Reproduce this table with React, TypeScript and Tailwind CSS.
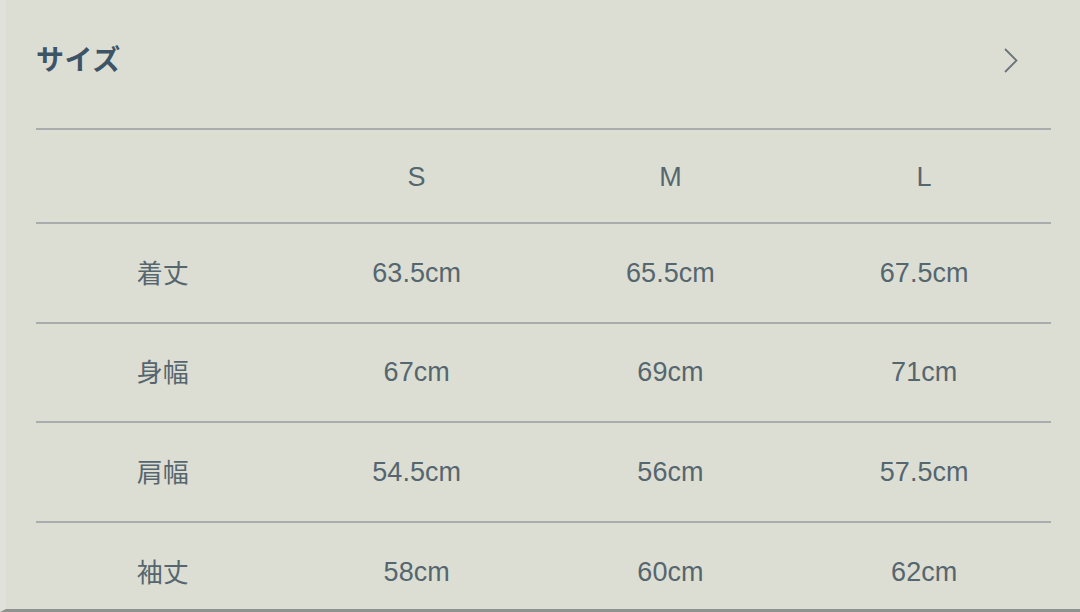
const sizes = ["S", "M", "L"];

const rows = [
  { label: "着丈", values: ["63.5cm", "65.5cm", "67.5cm"] },
  { label: "身幅", values: ["67cm", "69cm", "71cm"] },
  { label: "肩幅", values: ["54.5cm", "56cm", "57.5cm"] },
  { label: "袖丈", values: ["58cm", "60cm", "62cm"] },
];

export default function App() {
  return (
    <div
      className="w-[1080px] h-[612px] overflow-hidden bg-[#dcded4] border-l-[6px] border-l-[#e0e1da] border-b-[3px] border-b-[#8e9290] text-[#56666f]"
      style={{ fontFamily: '"Liberation Sans", "Noto Sans CJK JP", sans-serif' }}
    >
      <div className="pl-[30px] pr-[29px]">
        {/* Header */}
        <div className="h-[128px] flex items-start justify-between pt-[42px]">
          <h1
            className="text-[28px] leading-[32px] font-bold text-[#3d5466] tracking-[0.02em]"
            style={{ fontFamily: '"Noto Sans CJK JP", sans-serif' }}
          >
            サイズ
          </h1>
          <svg width="18" height="28" viewBox="0 0 18 28" className="mr-[31px] mt-[5px]">
            <path d="M3 2 L14.5 13.5 L3 25" fill="none" stroke="#6b7479" strokeWidth="1.8" />
          </svg>
        </div>

        {/* Table */}
        <div className="grid grid-cols-4 h-[94px] border-t-2 border-[#a8acac] items-center text-center text-[27px]">
          <div />
          {sizes.map((s) => (
            <div key={s} className="pt-[2px]">{s}</div>
          ))}
        </div>
        {rows.map((r, i) => (
          <div
            key={r.label}
            className={`grid grid-cols-4 border-t-2 border-[#a8acac] items-center text-center text-[27px] ${i === 1 ? "h-[99px]" : "h-[100px]"}`}
          >
            <div
              className="text-[26px] pb-[4px]"
              style={{ fontFamily: '"Noto Sans CJK JP", sans-serif' }}
            >
              {r.label}
            </div>
            {r.values.map((v, j) => (
              <div key={j}>{v}</div>
            ))}
          </div>
        ))}
      </div>
    </div>
  );
}
